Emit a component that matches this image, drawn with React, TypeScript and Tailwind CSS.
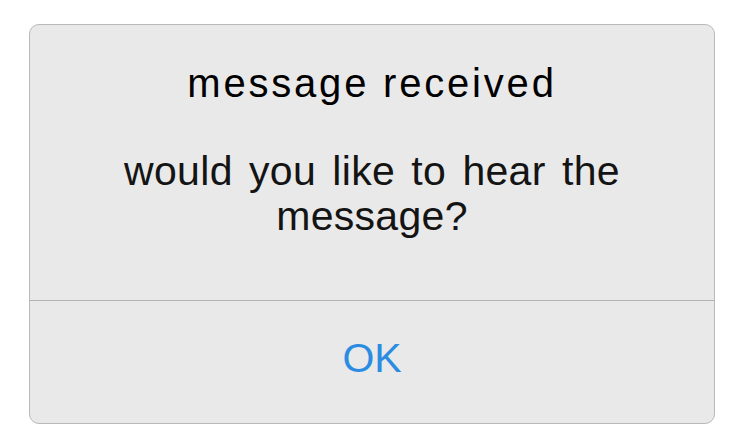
import React from "react";

export default function App() {
  return (
    <div className="w-[740px] h-[448px] bg-white pt-[24px] pl-[29px]" style={{ fontFamily: '"Liberation Sans", Arial, sans-serif' }}>
      <div className="w-[686px] h-[400px] rounded-[10px] border border-[#b9b9b9] bg-[#e9e9e9] flex flex-col overflow-hidden">
        <div className="h-[276px] border-b border-[#b3b3b3] flex flex-col items-center pt-[34px]">
          <div className="text-[40px] leading-[48px] text-black tracking-[2.8px]">message received</div>
          <div className="mt-[42px] text-[41px] leading-[45px] text-[#141414] text-center tracking-[0.3px] [word-spacing:4.6px] px-[20px]">
            would you like to hear the<br />message?
          </div>
        </div>
        <div className="flex-1 flex items-center justify-center pb-[8px]">
          <span className="text-[41px] leading-[48px] text-[#2b8ce1]">OK</span>
        </div>
      </div>
    </div>
  );
}
